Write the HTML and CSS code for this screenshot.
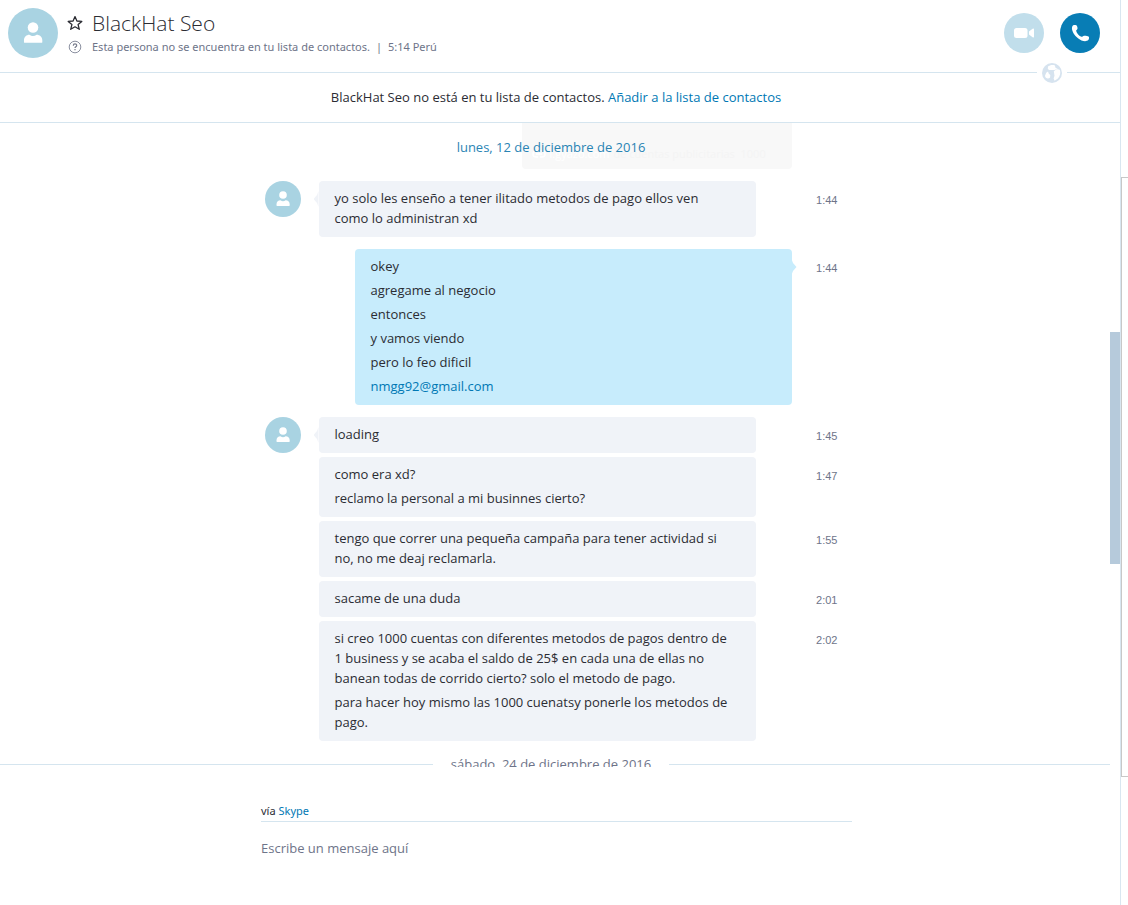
FILE: index.html
```html
<!DOCTYPE html>
<html lang="es">
<head>
<meta charset="utf-8">
<title>BlackHat Seo</title>
<link rel="stylesheet" href="styles.css">
</head>
<body>
<svg class="sprite" aria-hidden="true">
  <symbol id="person" viewBox="0 0 36 36">
    <circle cx="18" cy="14" r="3.800"/>
    <path d="M11.500 24.600v-1.400c0-2.300 1.900-3.900 3.900-3.900 1 .6 1.700.9 2.600.9s1.800-.3 2.600-.9c2.200 0 4.100 1.600 4.100 3.900v1.400c0 .3-.3.5-.6.5h-12c-.3 0-.6-.2-.6-.5z"/>
  </symbol>
</svg>
<div class="app">
  <main class="chat">
    <header class="header">
      <span class="avatar avatar-large"><svg><use href="#person"/></svg></span>
      <div class="contact">
        <button class="icon-button" type="button" aria-label="Favorito">
          <svg viewBox="0 0 16 16"><path d="M8 1.600l1.900 4.400 4.900.4-3.700 3.200 1.200 4.700L8 11.800l-4.300 2.500 1.200-4.700L1.200 6.400l4.900-.4z" fill="none" stroke="#2b2c33" stroke-width="1.300" stroke-linejoin="round"/></svg>
        </button>
        <h1 class="name">BlackHat Seo</h1>
        <svg class="status-icon" viewBox="0 0 16 16"><circle cx="8" cy="8" r="5.800" fill="none" stroke="#8b90a0"/><path d="M6.300 6.700c0-2.300 3.400-2.300 3.400-.2 0 1.300-1.700 1.200-1.700 2.500M8 10v1.300" fill="none" stroke="#777c8c" stroke-width="1.200"/></svg>
        <p class="status">Esta persona no se encuentra en tu lista de contactos.<span class="bar">|</span>5:14 Perú</p>
      </div>
      <div class="calls">
        <button class="call call-video" type="button" aria-label="Videollamada" disabled>
          <svg viewBox="0 0 40 40"><rect x="10" y="15" width="13.500" height="10" rx="2.500"/><path d="M25 18.500l3.600-2.700q1.400-.6 1.400.5v7.400q0 1.100-1.400.5L25 21.500z"/></svg>
        </button>
        <button class="call" type="button" aria-label="Llamar">
          <svg viewBox="0 0 40 40"><path d="M13.200 12.300c1.300-.7 3.200-.5 3.700.5.500 1.300.8 2.400.5 3.300-.3.800-1.300 1-1.200 1.800.5 2.300 3 5 5.300 5.900.8.200 1.200-.6 1.900-.9 1.300-.4 4.200 0 5.400.9.500.6.300 2.400-.5 3.300-1.300 1.300-4.300 1.400-6.800.3-4.300-1.800-8.500-6.300-9.400-10.600-.3-1.900-.1-3.600 1.100-4.500z"/></svg>
        </button>
      </div>
    </header>
    <div class="rule">
      <svg class="globe" viewBox="0 0 20 20"><circle cx="10" cy="10" r="10"/><path d="M6 3.500c1.500-1.300 4.500-2 7-1.100l.3 2.200 1.500 1 2.400.9h-3.700l-1 .5H7.200L5.800 6zM3 12.800l1.200-3 1.800-1.300.8 2.200 1.500 1.300-.2 2.600c-1.700 1.600-4.900.9-5.100-1.800zM11.800 8.200l2-1.400h4c1.100 3 .4 6.300-1.900 8.600l-3.300 2.300-1-2.300.9-2.700z" fill="#fff"/></svg>
    </div>
    <p class="notice">BlackHat Seo no está en tu lista de contactos. <a href="#">Añadir a la lista de contactos</a></p>

    <section class="messages">
      <div class="column">
        <h2 class="day">
          <span class="ghost" aria-hidden="true"><svg viewBox="0 0 14 10"><path d="M6 8H4a3 3 0 010-6h2m2 0h2a3 3 0 010 6H8M4 5h6" fill="none" stroke="currentColor" stroke-width="1.500"/></svg><span class="ghost-link">i.gyazo.com</span><span>de cuentas publicitarias&nbsp; 1000</span></span>
          <span class="day-text">lunes, 12 de diciembre de 2016</span>
        </h2>
        <article class="message first">
          <span class="avatar"><svg><use href="#person"/></svg></span>
          <div class="bubble"><p>yo solo les enseño a tener ilitado metodos de pago ellos ven como lo administran xd</p></div>
          <time>1:44</time>
        </article>
        <article class="message own first">
          <div class="bubble">
            <p>okey</p><p>agregame al negocio</p><p>entonces</p><p>y vamos viendo</p><p>pero lo feo dificil</p>
            <p><a href="mailto:nmgg92@gmail.com">nmgg92@gmail.com</a></p>
          </div>
          <time>1:44</time>
        </article>
        <article class="message first">
          <span class="avatar"><svg><use href="#person"/></svg></span>
          <div class="bubble"><p>loading</p></div>
          <time>1:45</time>
        </article>
        <article class="message">
          <div class="bubble"><p>como era xd?</p><p>reclamo la personal a mi businnes cierto?</p></div>
          <time>1:47</time>
        </article>
        <article class="message">
          <div class="bubble"><p>tengo que correr una pequeña campaña para tener actividad si no, no me deaj reclamarla.</p></div>
          <time>1:55</time>
        </article>
        <article class="message">
          <div class="bubble"><p>sacame de una duda</p></div>
          <time>2:01</time>
        </article>
        <article class="message">
          <div class="bubble"><p>si creo 1000 cuentas con diferentes metodos de pagos dentro de 1 business y se acaba el saldo de 25$ en cada una de ellas no banean todas de corrido cierto? solo el metodo de pago.</p><p>para hacer hoy mismo las 1000 cuenatsy ponerle los metodos de pago.</p></div>
          <time>2:02</time>
        </article>
      </div>
      <h2 class="divider">sábado, 24 de diciembre de 2016</h2>
      <span class="thumb"></span>
    </section>

    <form class="composer">
      <p class="via">vía <a href="#">Skype</a></p>
      <input class="entry" type="text" placeholder="Escribe un mensaje aquí" aria-label="Escribe un mensaje aquí">
    </form>
  </main>
  <aside class="side"><div class="panel"></div></aside>
</div>
</body>
</html>
```
FILE: styles.css
```css
* { box-sizing: border-box; }
body, h1, h2, p { margin: 0; }
body {
  background: #fff;
  color: #2b2c33;
  font: 13px/20px "Open Sans", "Noto Sans", sans-serif;
}
a { color: #0078b4; text-decoration: none; }
button { border: 0; padding: 0; background: none; }
svg { display: block; fill: currentColor; }
.sprite { position: absolute; width: 0; height: 0; }

.app { display: flex; height: 100vh; }
.chat { flex: 1; min-width: 0; display: flex; flex-direction: column; }
.side { width: 8px; border-left: 1px solid #d9e6f0; padding-top: 177px; overflow: hidden; }
.panel { height: 600px; border: 1px solid #c8c8c8; border-right: 0; }

.header { display: flex; align-items: flex-start; height: 63px; padding: 8px 20px 0 8px; }
.avatar { width: 36px; height: 36px; border-radius: 50%; background: #a9d3e2; color: #fff; }
.avatar svg { width: 100%; height: 100%; }
.avatar-large { width: 50px; height: 50px; }
.contact {
  flex: 1;
  display: grid;
  grid-template-columns: 16px 1fr;
  grid-template-rows: 30px 18px;
  column-gap: 9px;
  align-items: center;
  margin-left: 9px;
}
.icon-button, .icon-button svg, .status-icon { width: 16px; height: 16px; }
.name { font: 300 21px/30px "Open Sans", "Noto Sans", sans-serif; }
.status { color: #6e7489; font: 11px/18px "Noto Sans", sans-serif; }
.bar { margin: 0 6px; }
.calls { display: flex; gap: 16px; padding-top: 5px; }
.call { width: 40px; height: 40px; border-radius: 50%; background: #087db5; color: #fff; }
.call-video { background: #c1deeb; }

.rule { display: flex; align-items: center; height: 19px; margin-bottom: -9px; color: #d6e3ef; }
.rule::before, .rule::after { content: ""; height: 1px; background: #d5e5ef; }
.rule::before { flex: 1; }
.rule::after { width: 53px; }
.globe { width: 20px; height: 20px; margin: 0 5px; }
.notice { padding: 14px 8px 15px 0; border-bottom: 1px solid #d5e5ef; text-align: center; }

.messages { position: relative; flex: 1; min-height: 0; overflow: hidden; padding-right: 18px; }
.column { width: 573px; margin: 0 auto; }
.day { position: relative; height: 46px; padding-top: 14px; color: #2a84b4; font: inherit; text-align: center; }
.day-text { position: relative; }
.ghost {
  position: absolute;
  top: 0;
  left: 257px;
  display: flex;
  align-items: center;
  gap: 4px;
  width: 270px;
  height: 46px;
  padding: 16px 0 0 10px;
  border-radius: 0 0 4px 4px;
  background: #f8f8f8;
  color: #f4f4f4;
  font-size: 11px;
  white-space: nowrap;
}
.ghost svg { width: 14px; height: 10px; color: #fff; }
.ghost-link { color: #fff; }
.message { display: flex; align-items: flex-start; margin-top: 4px; padding-left: 54px; }
.message.first { margin-top: 12px; }
.message .avatar { margin-left: -54px; margin-right: 18px; }
.message.own { padding-left: 90px; }
.bubble {
  position: relative;
  width: 437px;
  padding: 7px 28px 9px 16px;
  border-radius: 4px;
  background: #f0f3f8;
}
.bubble p + p { margin-top: 4px; }
.own .bubble { background: #c7ecfc; }
.first .bubble::before {
  content: "";
  position: absolute;
  top: 10px;
  left: -5px;
  width: 5px;
  height: 16px;
  background: inherit;
  clip-path: polygon(0 50%, 70% 25%, 100% 0, 100% 100%, 70% 75%);
}
.first.own .bubble::before { left: auto; right: -5px; clip-path: polygon(100% 50%, 30% 25%, 0 0, 0 100%, 30% 75%); }
time { margin: 9px 0 0 auto; color: #6e7489; font: 11px/20px "Liberation Sans", sans-serif; }
.divider { display: flex; align-items: center; margin: 13px -8px 0 0; color: #6e7489; font: inherit; }
.divider::before, .divider::after { content: ""; flex: 1 1 0; height: 1px; background: #d5e5ef; margin-right: 18px; }
.divider::after { flex-basis: 8px; margin: 0 0 0 18px; }
.thumb { position: absolute; right: 0; top: 209px; width: 10px; height: 232px; background: #b6cadb; }

.composer { width: 591px; height: 138px; margin-left: calc(50% - 299px); padding-top: 34px; }
.via { border-bottom: 1px solid #d5e5ef; font: 11px/20px "Noto Sans", sans-serif; }
.entry { width: 100%; height: 24px; margin-top: 14px; padding: 0; border: 0; outline: 0; color: #2b2c33; font: inherit; }
.entry::placeholder { color: #6e7489; opacity: 1; }
```
